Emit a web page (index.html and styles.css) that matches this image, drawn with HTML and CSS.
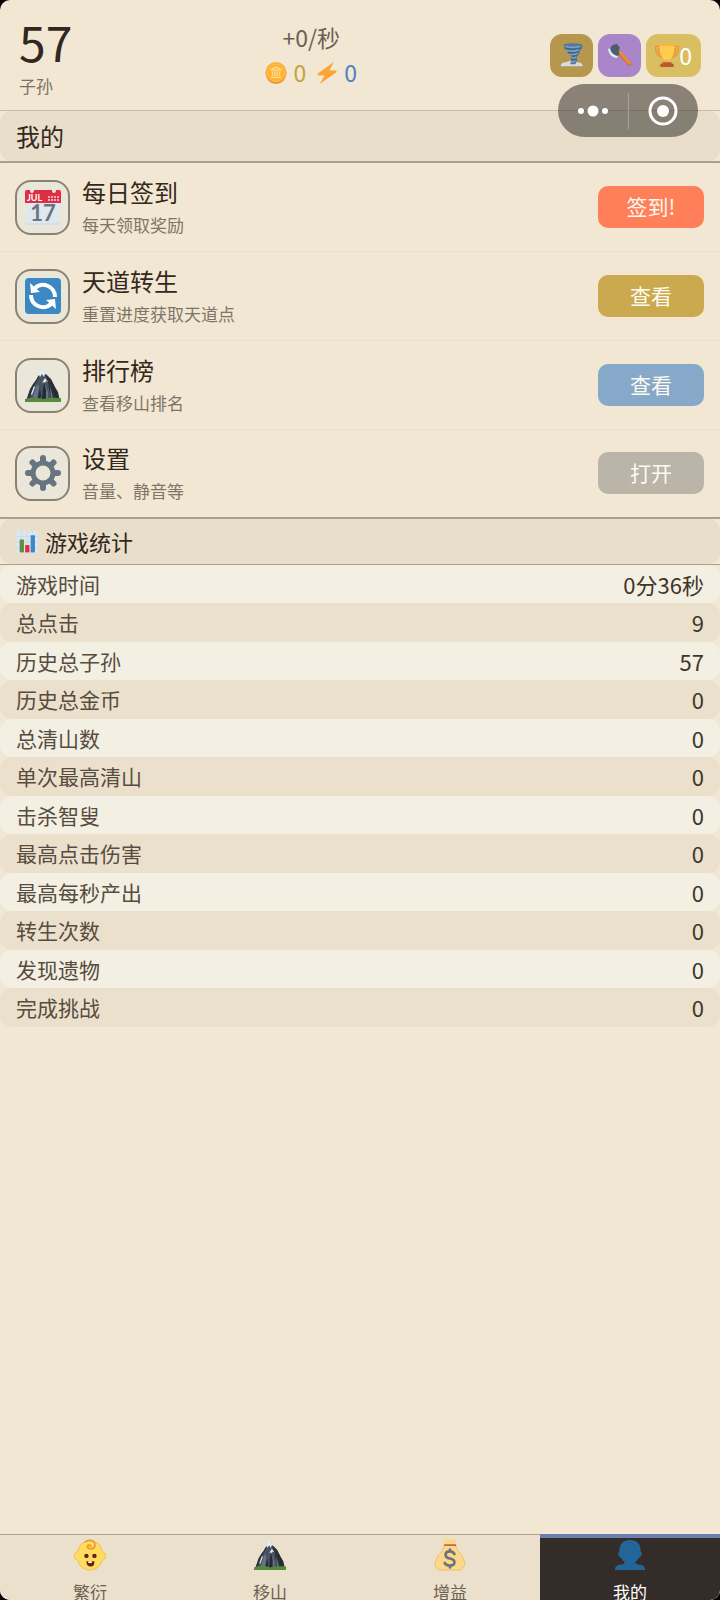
FILE: index.html
```html
<!DOCTYPE html>
<html lang="zh-CN">

<head>
    <meta charset="UTF-8">
    <meta name="viewport" content="width=device-width, initial-scale=1.0">
    <title>我的</title>
    <link rel="stylesheet" href="styles.css">
</head>

<body>

    <!-- shared icon -->
    <svg class="defs" aria-hidden="true">
        <symbol id="mountain" viewBox="0 0 36 36">
            <path fill="#2b323b" d="M1 34 5 22l3-5 3-4 3-6 3-5 4 5 5 5 4 8 3 5 2 9z" />
            <path fill="#4b5362" d="M4 33 8 21l5-9 4-9 4 7 2 5 3 18z" />
            <path fill="#66758a" d="m8 30 4-13 2 3-2 12zM20 18l3 7v7h-3zM25 20l2 6 1 6h-2z" />
            <path fill="#242a31" d="m17 32 1-11 1-5 2 7v9zM13 32l2-11 1 8-1 3zM26 13l4 8 3 10h-2l-4-11z" />
            <path fill="#e6ebf0" d="m17 1 5 7-2-1-1 3-2-3-2 3-1-2-3 3zM20 11l3 4-2-1-1 2-1-1-2 1zM9 19l1 1-3 8-1-1z" />
            <path fill="#568b3c" d="M0 35v-3q9-3 18 0 9-2 18-1v4z" />
        </symbol>
    </svg>

    <header class="topbar">
        <div class="score">
            <div class="score-value">57</div>
            <div class="score-label">子孙</div>
        </div>

        <div class="resources">
            <div class="rate">+0/秒</div>
            <div class="resource-row">
                <span class="resource gold">
                    <svg class="icon-small" viewBox="0 0 36 36" aria-hidden="true">
                        <circle cx="18" cy="19" r="17" fill="#e88b2e" />
                        <circle cx="18" cy="17" r="17" fill="#ffac33" />
                        <circle cx="18" cy="17" r="14" fill="#ffb232" stroke="#ffcb66" />
                        <path fill="none" stroke="#ffdf99" stroke-width="2" d="M10 13v-1l8-4 8 4v1zM12 15v8M16 15v8M20 15v8M24 15v8M10 25h16" />
                    </svg>
                    0
                </span>
                <span class="resource energy">
                    <svg class="icon-small" viewBox="0 0 36 36" aria-hidden="true">
                        <path fill="#faa634" d="M29 0 3 19q-2 3 1 3h10L6 36l27-19q2-3-1-3H22z" />
                    </svg>
                    0
                </span>
            </div>
        </div>

        <div class="badges">
            <button type="button" class="badge badge-wind" aria-label="旋风">
                <svg class="icon" viewBox="0 0 36 36" aria-hidden="true">
                    <path fill="#d7dce2" d="M1 35q0-6 8-6 9-4 17 0 8 0 8 6z" />
                    <path fill="#55789b" d="M6 2q12-3 27 0 3 6-3 9l-1 5-4 5 1 5-3 6h-8l2-5-1-4 2-3-6-4-2-5q-6-3-4-9z" />
                    <path fill="none" stroke="#88a8c4" stroke-width="2" d="M8 5q11 3 22 0M9 11q12 3 19-1M13 17q9 2 13-2M18 22q5 1 6-1M17 28q4 1 6-2" />
                    <path fill="none" stroke="#34516e" d="M8 8q11 3 23 0M12 14q9 3 15-1M16 19q6 2 9-1M17 25q4 1 7-1" />
                </svg>
            </button>
            <button type="button" class="badge badge-axe" aria-label="斧头">
                <svg class="icon" viewBox="0 0 36 36" aria-hidden="true">
                    <path stroke="#c9732c" stroke-width="6" stroke-linecap="round" d="m12 9 20 22" />
                    <path stroke="#ed8b35" stroke-width="4" stroke-linecap="round" d="m18 14 14 16" />
                    <path fill="#4a5e6e" d="m7 3 6-2 5 6-2 4 1 7-5 2-7-5-2-7z" />
                    <path fill="#e4eaf0" d="M3 8q1 9 12 12l-2 3Q1 20 0 9z" />
                </svg>
            </button>
            <button type="button" class="badge badge-trophy" aria-label="成就 0">
                <svg class="icon" viewBox="0 0 36 36" aria-hidden="true">
                    <path fill="none" stroke="#e99531" stroke-width="2" d="M8 5H1q-1 13 9 17M28 5h7q1 13-9 17M8 9H5q0 7 5 10M28 9h3q0 7-5 10" />
                    <path fill="#ffac33" d="M16 22h4v9h-4z" />
                    <path fill="#ffcc4d" d="M7 2h22q1 17-7 23h-8Q6 19 7 2z" />
                    <path fill="#ffac33" d="M7 2h22v2H7z" />
                    <path fill="#b85b34" d="M11 29h14v2h3v5H8v-5h3z" />
                </svg>
                <span>0</span>
            </button>
        </div>

        <!-- floats over the header and the page title -->
        <div class="capsule">
            <button type="button" class="capsule-button" aria-label="更多">
                <svg viewBox="0 0 32 12" width="32" height="12" fill="#fff" aria-hidden="true">
                    <circle cx="4" cy="6" r="3" />
                    <circle cx="16" cy="6" r="5.5" />
                    <circle cx="28" cy="6" r="3" />
                </svg>
            </button>
            <button type="button" class="capsule-button" aria-label="关闭">
                <svg viewBox="0 0 30 30" width="30" height="30" aria-hidden="true">
                    <circle cx="15" cy="15" r="13" fill="none" stroke="#fff" stroke-width="3" />
                    <circle cx="15" cy="15" r="6" fill="#fff" />
                </svg>
            </button>
        </div>
    </header>

    <main class="content">
        <div class="page-title">
            <h1>我的</h1>
        </div>

        <ul class="menu">
            <li class="menu-item">
                <div class="menu-icon">
                    <svg viewBox="0 0 36 36" aria-hidden="true">
                        <path fill="#d5dfe8" d="M1 14h34v19q0 3-3 3H4q-3 0-3-3z" />
                        <path fill="#e1e8ed" d="M1 12h34v19q0 3-3 3H4q-3 0-3-3z" />
                        <path fill="#dd2e44" d="M0 3q0-2 2-2h3q0 3 2 3t2-3h18q0 3 2 3t2-3h3q2 0 2 2v11H0z" />
                        <path fill="#f4abba" d="M23 7h2v2h-2zM26 7h2v2h-2zM29 7h2v2h-2zM32 7h2v2h-2zM23 10h2v2h-2zM26 10h2v2h-2zM29 10h2v2h-2zM32 10h2v2h-2z" />
                        <text class="calendar-month" x="2" y="12">JUL</text>
                        <text class="calendar-day" x="18" y="32">17</text>
                    </svg>
                </div>
                <div class="menu-text">
                    <h2>每日签到</h2>
                    <p>每天领取奖励</p>
                </div>
                <button type="button" class="action action-sign">签到!</button>
            </li>
            <li class="menu-item">
                <div class="menu-icon">
                    <svg viewBox="0 0 36 36" aria-hidden="true">
                        <rect width="36" height="36" rx="4" fill="#3b88c3" />
                        <path fill="none" stroke="#fff" stroke-width="4" d="M10 10a12 12 0 0 1 20 9M26 26a12 12 0 0 1-20-9" />
                        <path fill="#fff" d="m5 5 1 10 9-1zM31 31l-1-10-9 1z" />
                    </svg>
                </div>
                <div class="menu-text">
                    <h2>天道转生</h2>
                    <p>重置进度获取天道点</p>
                </div>
                <button type="button" class="action action-rebirth">查看</button>
            </li>
            <li class="menu-item">
                <div class="menu-icon">
                    <svg aria-hidden="true"><use href="#mountain" /></svg>
                </div>
                <div class="menu-text">
                    <h2>排行榜</h2>
                    <p>查看移山排名</p>
                </div>
                <button type="button" class="action action-rank">查看</button>
            </li>
            <li class="menu-item">
                <div class="menu-icon">
                    <svg viewBox="0 0 36 36" aria-hidden="true">
                        <g stroke="#66757f" stroke-width="6" stroke-linecap="round">
                            <path d="M18 3v5M18 28v5M3 18h5M28 18h5M7.500 7.500l3 3M25.500 25.500l3 3M28.500 7.500l-3 3M10.500 25.500l-3 3" />
                        </g>
                        <circle cx="18" cy="18" r="10" fill="#ebe6da" stroke="#66757f" stroke-width="5" />
                    </svg>
                </div>
                <div class="menu-text">
                    <h2>设置</h2>
                    <p>音量、静音等</p>
                </div>
                <button type="button" class="action action-settings">打开</button>
            </li>
        </ul>

        <section class="stats">
            <div class="stats-title">
                <h2>
                    <svg class="icon-small" viewBox="0 0 36 36" aria-hidden="true">
                        <rect width="36" height="36" rx="3" fill="#dbe6ef" />
                        <path stroke="#c3d4e2" d="M0 9h36M0 18h36M0 27h36M9 0v36M18 0v36M27 0v36" />
                        <path fill="#5c913b" d="M6 14h7v21H6z" />
                        <path fill="#dd2e44" d="M15 23h7v12h-7z" />
                        <path fill="#3b88c3" d="M24 7h7v28h-7z" />
                    </svg>
                    游戏统计
                </h2>
            </div>
            <table class="stats-table">
                <tbody>
                    <tr><th scope="row">游戏时间</th><td>0分36秒</td></tr>
                    <tr><th scope="row">总点击</th><td>9</td></tr>
                    <tr><th scope="row">历史总子孙</th><td>57</td></tr>
                    <tr><th scope="row">历史总金币</th><td>0</td></tr>
                    <tr><th scope="row">总清山数</th><td>0</td></tr>
                    <tr><th scope="row">单次最高清山</th><td>0</td></tr>
                    <tr><th scope="row">击杀智叟</th><td>0</td></tr>
                    <tr><th scope="row">最高点击伤害</th><td>0</td></tr>
                    <tr><th scope="row">最高每秒产出</th><td>0</td></tr>
                    <tr><th scope="row">转生次数</th><td>0</td></tr>
                    <tr><th scope="row">发现遗物</th><td>0</td></tr>
                    <tr><th scope="row">完成挑战</th><td>0</td></tr>
                </tbody>
            </table>
        </section>
    </main>

    <nav class="tabbar">
        <a class="tab" href="#breed">
            <svg class="tab-icon" viewBox="0 0 36 36" aria-hidden="true">
                <path fill="#ffdc5d" stroke="#e8bd4e" d="M18 2q11 0 14 12 4 2 4 5t-4 5q-4 11-14 11T4 24q-4-2-4-5t4-5Q7 2 18 2z" />
                <path fill="none" stroke="#ea9b32" stroke-width="2" stroke-linecap="round" d="M13 3q6-4 10 1 2 7-4 7-4 0-4-3 2-3 4 0" />
                <circle cx="14" cy="19" r="2.500" fill="#662113" />
                <circle cx="23" cy="19" r="2.500" fill="#662113" />
                <path fill="#662113" d="M14 25h9q0 6-4 6-5 0-5-6z" />
                <path fill="#fff" d="M16 25h4v2h-4z" />
            </svg>
            <span>繁衍</span>
        </a>
        <a class="tab" href="#mountains">
            <svg class="tab-icon" aria-hidden="true"><use href="#mountain" /></svg>
            <span>移山</span>
        </a>
        <a class="tab" href="#boost">
            <svg class="tab-icon" viewBox="0 0 36 36" aria-hidden="true">
                <path fill="#fdd888" stroke="#e9bc68" d="M12 7h12q1 6 7 11l4 9q-2 9-9 8H9q-8 0-8-8l4-9q6-5 7-11z" />
                <path fill="#fdd888" d="M10 1q4-2 7 0 4-2 8 0l-1 6H12z" />
                <path stroke="#bf6952" stroke-width="2" stroke-linecap="round" d="M12 7h12" />
                <path fill="none" stroke="#67757f" stroke-width="3" stroke-linecap="round" d="M23 17q-2-3-5-3-5 0-5 4 0 3 5 4t5 4q0 4-5 4-4 0-6-3M18 12v2M18 30v2" />
            </svg>
            <span>增益</span>
        </a>
        <a class="tab tab-active" href="#mine" aria-current="page">
            <svg class="tab-icon" viewBox="0 0 36 36" aria-hidden="true">
                <path fill="#226699" d="M18 1q12 0 12 13 2 0 1 4-1 3-3 3-1 3-4 5 0 3 6 3 5 1 5 6H1q0-5 5-6 6 0 6-3-3-2-4-5-2 0-3-3-1-4 1-4Q6 1 18 1z" />
            </svg>
            <span>我的</span>
        </a>
    </nav>

</body>

</html>
```
FILE: styles.css
```css
* {
    box-sizing: border-box;
}

html {
    background-color: #000;
}

body {
    position: relative;
    display: flex;
    flex-direction: column;
    height: 100vh;
    margin: 0;
    overflow: hidden;
    border-radius: 10px;
    background-color: #f2e7d3;
    color: #332820;
    font-family: "Noto Sans CJK SC", "Noto Sans", sans-serif;
}

h1,
h2,
p,
ul {
    margin: 0;
    padding: 0;
    font-weight: normal;
}

button {
    padding: 0;
    border: none;
    font-family: inherit;
    color: #fff;
    cursor: pointer;
}

svg {
    display: block;
}

.defs {
    position: absolute;
    width: 0;
    height: 0;
}

.icon {
    width: 24px;
    height: 24px;
}

.icon-small {
    width: 22px;
    height: 22px;
}

/* Header */

.topbar {
    display: flex;
    justify-content: space-between;
    align-items: center;
    flex-shrink: 0;
    height: 111px;
    padding: 0 19px;
    border-bottom: 1px solid #c5bba9;
}

.score-value {
    font-size: 48px;
    line-height: 62px;
}

.score-label {
    color: #7b7163;
    font-size: 17px;
    line-height: 28px;
}

.resources {
    display: flex;
    flex-direction: column;
    align-items: center;
    color: #6a6054;
    font-size: 23px;
    line-height: 35px;
}

.resource-row {
    display: flex;
    gap: 10px;
}

.resource {
    display: flex;
    align-items: center;
    gap: 6px;
}

.gold {
    color: #c4a33c;
}

.energy {
    color: #4f7fc4;
}

.badges {
    display: flex;
    gap: 5px;
}

.badge {
    display: flex;
    justify-content: center;
    align-items: center;
    min-width: 43px;
    height: 43px;
    border-radius: 12px;
    font-size: 23px;
}

.badge-wind {
    background-color: #b5974d;
}

.badge-axe {
    background-color: #a985c9;
}

.badge-trophy {
    padding: 0 9px;
    background-color: #d9be62;
}

.capsule {
    position: absolute;
    top: 84px;
    right: 22px;
    display: flex;
    align-items: center;
    width: 140px;
    height: 53px;
    border-radius: 27px;
    background-color: rgba(68, 63, 58, 0.6);
}

.capsule-button {
    display: flex;
    flex: 1;
    justify-content: center;
    align-items: center;
    height: 36px;
    background: none;
}

.capsule-button + .capsule-button {
    border-left: 1px solid #aaa397;
}

/* Page */

.content {
    flex: 1;
    min-height: 0;
    overflow: hidden;
}

.page-title {
    border-bottom: 2px solid #aca08c;
}

.page-title h1 {
    padding: 0 16px;
    border-radius: 12px;
    background-color: #e8deca;
    font-size: 24px;
    line-height: 50px;
}

.menu {
    list-style: none;
    border-bottom: 2px solid #aca08c;
}

.menu-item {
    display: flex;
    align-items: center;
    gap: 12px;
    padding: 11px 16px 11px 15px;
    border-bottom: 1px solid #ebdfcf;
}

.menu-item:last-child {
    padding-top: 10px;
    border-bottom: none;
}

.menu-icon {
    display: flex;
    justify-content: center;
    align-items: center;
    width: 55px;
    height: 55px;
    border: 2px solid #8b8276;
    border-radius: 16px;
    background-color: #ebe6da;
}

.menu-icon svg {
    width: 36px;
    height: 36px;
}

.calendar-month {
    fill: #fff;
    font: bold 9px Lato, sans-serif;
}

.calendar-day {
    fill: #66757f;
    font: bold 22px "Liberation Sans Narrow", Lato, sans-serif;
    text-anchor: middle;
}

.menu-text {
    flex: 1;
}

.menu-text h2 {
    font-size: 24px;
    line-height: 36px;
}

.menu-text p {
    color: #7f7567;
    font-size: 17px;
    line-height: 30px;
}

.action {
    width: 106px;
    height: 42px;
    padding-bottom: 3px;
    border-radius: 10px;
    color: #fffaf0;
    font-size: 21px;
}

.action-sign {
    background-color: #ff7f5a;
}

.action-rebirth {
    background-color: #cba94f;
}

.action-rank {
    background-color: #87a9c9;
}

.action-settings {
    background-color: #bab5a8;
}

/* Statistics */

.stats-title {
    border-bottom: 1px solid #aca08c;
}

.stats-title h2 {
    display: flex;
    align-items: center;
    gap: 7px;
    padding: 0 16px;
    border-radius: 12px;
    background-color: #e8deca;
    font-size: 22px;
    line-height: 45px;
}

.stats-table {
    width: 100%;
    border-collapse: separate;
    border-spacing: 0;
    line-height: 38px;
}

.stats-table th,
.stats-table td {
    padding: 0 16px;
    background-color: #f3efe2;
}

.stats-table th {
    border-radius: 12px 0 0 12px;
    color: #574c40;
    font-size: 21px;
    font-weight: normal;
    text-align: left;
}

.stats-table td {
    border-radius: 0 12px 12px 0;
    color: #40352b;
    font-size: 22px;
    text-align: right;
}

.stats-table tr:nth-child(even) {
    line-height: 39px;
}

.stats-table tr:nth-child(even) th,
.stats-table tr:nth-child(even) td {
    background-color: #ebe0cc;
}

/* Tab bar */

.tabbar {
    display: flex;
    flex-shrink: 0;
    height: 66px;
    overflow: hidden;
    background-color: #ebe0cc;
}

.tab {
    display: flex;
    flex: 1;
    flex-direction: column;
    align-items: center;
    gap: 8px;
    padding-top: 4px;
    border-top: 1px solid #aca08c;
    color: #6b6053;
    font-size: 17px;
    line-height: 25px;
    text-decoration: none;
}

.tab-icon {
    flex-shrink: 0;
    width: 32px;
    height: 32px;
}

.tab-active {
    padding-top: 1px;
    border-top: 4px solid #6b7fae;
    background-color: #332c28;
    color: #fff;
}
```
